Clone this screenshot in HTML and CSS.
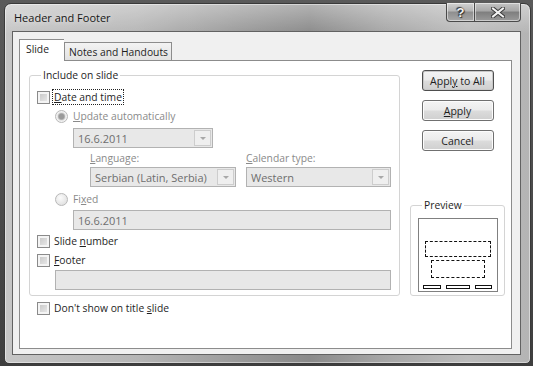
FILE: index.html
```html
<!DOCTYPE html>
<html>
<head>
	<title>Header and Footer</title>
	<link rel="stylesheet" href="styles.css">
</head>
<body>
	<div class="window">
		<div class="titlebar">
			<span class="title">Header and Footer</span>
			<div class="caption-buttons">
				<span class="cap-btn help">?</span>
				<span class="cap-btn close">
					<svg width="14" height="11" viewBox="0 0 14 11">
						<path d="M2 1.5 L12 9.5 M12 1.5 L2 9.5" stroke="#3a3a3a" stroke-width="4" stroke-linecap="square"/>
						<path d="M2 1.5 L12 9.5 M12 1.5 L2 9.5" stroke="#f2f2f2" stroke-width="2" stroke-linecap="square"/>
					</svg>
				</span>
			</div>
		</div>
		<div class="client">
			<div class="tabs">
				<span class="tab active">Slide</span>
				<span class="tab">Notes and Handouts</span>
			</div>
			<div class="panel">
				<div class="left">
					<div class="group include">
						<span class="legend">Include on slide</span>
						<label class="opt row-date">
							<span class="check"></span>
							<span class="focus"><u>D</u>ate and time</span>
						</label>
						<label class="opt indent1 row-gap1 disabled">
							<span class="radio checked"></span>
							<span><u>U</u>pdate automatically</span>
						</label>
						<div class="combo date-combo indent2">
							<span class="value">16.6.2011</span>
							<span class="drop"><span class="arrow"></span></span>
						</div>
						<div class="combo-pair indent3">
							<div class="field lang">
								<span class="field-label"><u>L</u>anguage:</span>
								<div class="combo">
									<span class="value">Serbian (Latin, Serbia)</span>
									<span class="drop"><span class="arrow"></span></span>
								</div>
							</div>
							<div class="field cal">
								<span class="field-label"><u>C</u>alendar type:</span>
								<div class="combo">
									<span class="value">Western</span>
									<span class="drop"><span class="arrow"></span></span>
								</div>
							</div>
						</div>
						<label class="opt indent1 row-fixed disabled">
							<span class="radio"></span>
							<span>Fi<u>x</u>ed</span>
						</label>
						<div class="textbox indent2 fixed-box"><span class="value">16.6.2011</span></div>
						<label class="opt row-slidenum">
							<span class="check"></span>
							<span>Slide <u>n</u>umber</span>
						</label>
						<label class="opt row-gap1">
							<span class="check"></span>
							<span><u>F</u>ooter</span>
						</label>
						<div class="textbox indent1 footer-box"></div>
					</div>
					<label class="opt dont-show">
						<span class="check"></span>
						<span>Don't show on title <u>s</u>lide</span>
					</label>
				</div>
				<div class="right">
					<button class="btn default">Appl<u>y</u> to All</button>
					<button class="btn"><u>A</u>pply</button>
					<button class="btn">Cancel</button>
					<div class="group preview">
						<span class="legend">Preview</span>
						<div class="slide">
							<div class="ph title-ph"></div>
							<div class="ph body-ph"></div>
							<div class="bars">
								<span class="bar b1"></span>
								<span class="bar b2"></span>
								<span class="bar b3"></span>
							</div>
						</div>
					</div>
				</div>
			</div>
		</div>
	</div>
</body>
</html>
```
FILE: styles.css
```css
body {
	margin: 0;
	height: 366px;
	overflow: hidden;
	background: linear-gradient(to bottom, #5a5a5a, #3e3e3e);
	font-family: "Open Sans", "Noto Sans", sans-serif;
	font-size: 10.3px;
	color: #1e1e1e;
}
u {
	text-decoration-thickness: 1px;
	text-underline-offset: 1px;
}

/* window frame */
.window {
	box-sizing: border-box;
	width: 527px;
	height: 361px;
	margin: 3px 0 0 4px;
	padding: 0 9px 8px 7px;
	border: 1px solid #3a3a3a;
	border-radius: 7px 7px 5px 5px;
	background:
		linear-gradient(to bottom, rgba(255,255,255,0.35), rgba(255,255,255,0) 30px),
		linear-gradient(to right, #c6c6c6 0%, #b6b6b6 25%, #9a9a9a 45%, #8a8a8a 58%, #a6a6a6 72%, #bcbcbc 88%, #b4b4b4 100%);
	box-shadow: inset 0 0 0 1px rgba(255,255,255,0.45);
	display: flex;
	flex-direction: column;
}
.titlebar {
	height: 27px;
	display: flex;
	align-items: flex-start;
	justify-content: space-between;
}
.title {
	margin: 6px 0 0 2px;
	font-size: 11px;
	color: #161616;
	text-shadow: 0 0 6px rgba(255,255,255,0.8);
}
.caption-buttons {
	display: flex;
	margin: -1px 0 0 0;
}
.cap-btn {
	box-sizing: border-box;
	height: 19px;
	display: flex;
	align-items: center;
	justify-content: center;
	border: 1px solid #4a4a4a;
	border-top: none;
	background: linear-gradient(to bottom, #d2d2d2 0%, #b4b4b4 45%, #8e8e8e 50%, #a8a8a8 100%);
	box-shadow: inset 0 0 0 1px rgba(255,255,255,0.5);
}
.help {
	width: 28px;
	border-radius: 0 0 0 4px;
	border-right: none;
	font-family: "Liberation Sans", sans-serif;
	font-weight: bold;
	font-size: 13px;
	color: #f4f4f4;
	text-shadow: 0 0 1px #222, 1px 1px 1px #333, -1px -1px 1px #333;
}
.close {
	width: 47px;
	border-radius: 0 0 4px 0;
	background: linear-gradient(to bottom, #c4c4c4 0%, #a6a6a6 45%, #7e7e7e 50%, #9a9a9a 100%);
}

/* client area */
.client {
	flex: 1;
	display: flex;
	flex-direction: column;
	border: 1px solid #626262;
	background: #f0f0f0;
}
.tabs {
	display: flex;
	align-items: flex-end;
	height: 21px;
	margin: 7px 0 0 6px;
}
.tab {
	box-sizing: border-box;
	height: 18px;
	padding: 0 3px 0 4px;
	display: flex;
	align-items: center;
	border: 1px solid #8c8c8c;
	border-bottom: none;
	background: linear-gradient(to bottom, #f3f3f3, #e2e2e2);
}
.tab.active {
	position: relative;
	height: 22px;
	width: 45px;
	margin-bottom: -1px;
	padding: 0 6px 3px;
	background: #fff;
	border-right: none;
}
.panel {
	flex: 1;
	display: flex;
	align-items: flex-start;
	gap: 10px;
	margin: 0 8px 5px 6px;
	padding: 0 6px 0 9px;
	border: 1px solid #8c8c8c;
	background: #fff;
}

/* group boxes */
.group {
	display: flex;
	flex-direction: column;
	margin-top: 14px;
	border: 1px solid #d4d4d4;
	border-radius: 3px;
}
.legend {
	width: fit-content;
	height: 16px;
	line-height: 16px;
	margin: -9px 0 0 4px;
	padding: 0 2px;
	background: #fff;
}
.left {
	width: 371px;
	display: flex;
	flex-direction: column;
}
.include {
	padding: 0 8px 5px 7px;
}

/* checkbox / radio rows */
.opt {
	height: 18px;
	display: flex;
	align-items: center;
	gap: 4px;
}
.row-date { margin-top: 5px; }
.row-gap1 { margin-top: 1px; }
.row-fixed { margin-top: 3px; }
.row-slidenum { margin-top: 2px; }
.dont-show { margin: 3px 0 0 8px; }
.indent1 { margin-left: 18px; }
.indent2 { margin-left: 36px; }
.indent3 { margin-left: 53px; }
.disabled, .field-label { color: #8a8a8a; }
.check {
	box-sizing: border-box;
	width: 13px;
	height: 13px;
	border: 1px solid #8a8a8a;
	background: linear-gradient(135deg, #c2c2c2, #eeeeee);
	box-shadow: inset 0 0 0 2px #f4f4f4;
}
.radio {
	box-sizing: border-box;
	width: 13px;
	height: 13px;
	margin-right: 1px;
	border: 1px solid #b8b8b8;
	border-radius: 50%;
	background: radial-gradient(circle at 40% 35%, #fbfbfb, #dadada);
}
.radio.checked {
	background: radial-gradient(circle, #9a9a9a 0 2.5px, #c4c4c4 3.5px, #e4e4e4 4px, #f2f2f2 5px);
}
.focus {
	outline: 1px dotted #222;
	outline-offset: 0;
	line-height: 14px;
	padding: 0 1px;
	margin-left: -1px;
}

/* combos and text boxes */
.combo, .textbox {
	box-sizing: border-box;
	height: 20px;
	display: flex;
	align-items: center;
	border: 1px solid #b2b2b2;
	background: #e8e8e8;
	color: #6e6e6e;
	font-size: 11px;
}
.value {
	flex: 1;
	padding-left: 4px;
	white-space: nowrap;
}
.drop {
	box-sizing: border-box;
	width: 17px;
	height: 16px;
	margin-right: 1px;
	display: flex;
	align-items: center;
	justify-content: center;
	border: 1px solid #cdcdcd;
	background: #efefef;
}
.arrow {
	width: 0;
	height: 0;
	border-left: 3px solid transparent;
	border-right: 3px solid transparent;
	border-top: 3px solid #a8a8a8;
}
.date-combo {
	width: 140px;
	margin-top: 3px;
}
.combo-pair {
	display: flex;
	gap: 10px;
	margin-top: 2px;
}
.field {
	display: flex;
	flex-direction: column;
	gap: 1px;
}
.field-label {
	height: 16px;
	line-height: 16px;
}
.lang { width: 146px; }
.cal { width: 145px; }
.fixed-box { margin-top: 2px; }
.footer-box { margin-top: 1px; }

/* buttons */
.right {
	width: 95px;
	display: flex;
	flex-direction: column;
	align-items: center;
}
.btn {
	box-sizing: border-box;
	width: 72px;
	height: 21px;
	margin-top: 9px;
	padding: 0;
	font: inherit;
	font-size: 10.5px;
	color: #1e1e1e;
	border: 1px solid #707070;
	border-radius: 3px;
	background: linear-gradient(to bottom, #f4f4f4 0%, #ebebeb 48%, #dcdcdc 52%, #cfcfcf 100%);
	box-shadow: inset 0 0 0 1px #fcfcfc;
}
.btn.default {
	border-color: #4e4e4e;
	box-shadow: inset 0 0 0 1px #c8c8c8;
}

/* preview */
.preview {
	width: 95px;
	box-sizing: border-box;
	margin-top: 54px;
	padding: 0 0 3px 7px;
}
.slide {
	box-sizing: border-box;
	width: 80px;
	height: 74px;
	margin-top: 5px;
	padding: 22px 0 2px;
	display: flex;
	flex-direction: column;
	border: 1px solid #808080;
}
.ph {
	box-sizing: border-box;
	border: 1px dashed #111;
}
.title-ph {
	width: 66px;
	height: 16px;
	margin-left: 6px;
}
.body-ph {
	width: 54px;
	height: 18px;
	margin: 3px 0 0 12px;
}
.bars {
	margin-top: auto;
	display: flex;
}
.bar {
	box-sizing: border-box;
	height: 4px;
	border: 1px solid #111;
}
.b1 { width: 18px; margin-left: 4px; }
.b2 { width: 24px; margin-left: 5px; }
.b3 { width: 17px; margin-left: 5px; }
```
